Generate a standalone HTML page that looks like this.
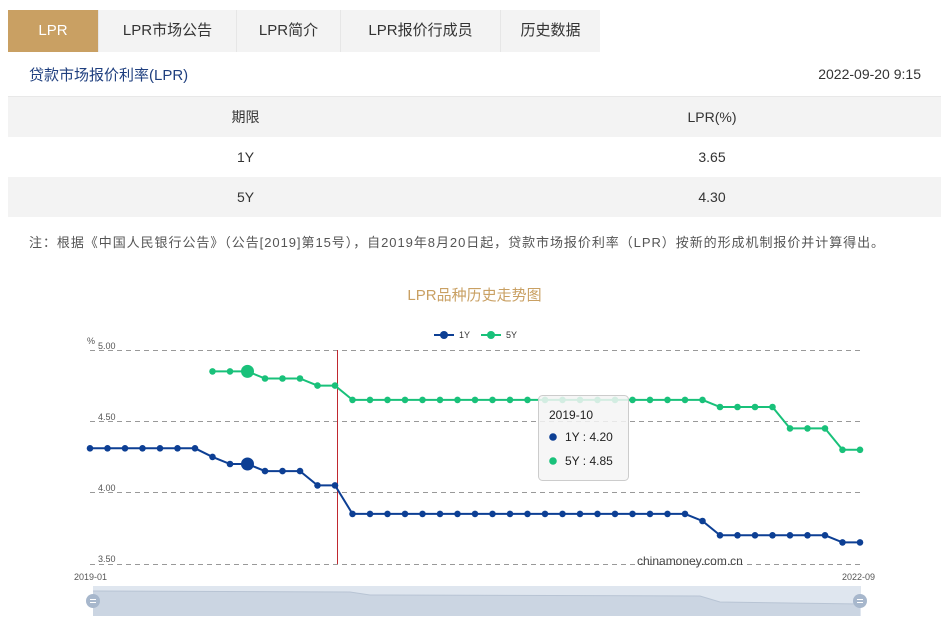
<!DOCTYPE html>
<html><head><meta charset="utf-8"><style>
*{margin:0;padding:0;box-sizing:border-box}
body{width:949px;height:623px;background:#fff;font-family:"Liberation Sans","Noto Sans CJK SC",sans-serif;color:#333;position:relative;overflow:hidden}
.tabs{position:absolute;left:8px;top:10px;height:42px;display:flex}
.tab{height:42px;line-height:42px;text-align:center;font-size:15px;color:#333;background:#f3f3f3;border-right:1px solid #e6e6e6}
.tab.on{background:#c9a063;color:#fff}
.title{position:absolute;left:29px;top:64px;font-size:15px;color:#1f3f7f}
.date{position:absolute;right:28px;top:66px;font-size:14px;color:#333}
.tbl{position:absolute;left:8px;top:96px;width:933px;border-top:1px solid #e8e8e8}
.row{height:40px;display:flex;font-size:14px;line-height:40px}
.row.g{background:#f3f3f3}
.row div{text-align:center}
.c1{width:475px}.c2{width:458px}
.note{position:absolute;left:29px;top:232px;font-size:13px;color:#555;letter-spacing:0.95px;white-space:nowrap}
.ct{position:absolute;left:0;width:949px;top:284px;text-align:center;font-size:15px;color:#c9a063}
</style></head><body>
<div class="tabs">
<div class="tab on" style="width:91px">LPR</div>
<div class="tab" style="width:138px">LPR市场公告</div>
<div class="tab" style="width:104px">LPR简介</div>
<div class="tab" style="width:160px">LPR报价行成员</div>
<div class="tab" style="width:99px;border-right:0">历史数据</div>
</div>
<div class="title">贷款市场报价利率(LPR)</div>
<div class="date">2022-09-20 9:15</div>
<div class="tbl">
<div class="row g"><div class="c1">期限</div><div class="c2">LPR(%)</div></div>
<div class="row"><div class="c1">1Y</div><div class="c2">3.65</div></div>
<div class="row g"><div class="c1">5Y</div><div class="c2">4.30</div></div>
</div>
<div class="note">注：根据《中国人民银行公告》（公告[2019]第15号），自2019年8月20日起，贷款市场报价利率（LPR）按新的形成机制报价并计算得出。</div>
<div class="ct">LPR品种历史走势图</div>
<svg width="949" height="623" style="position:absolute;left:0;top:0" font-family="Liberation Sans, sans-serif">
<defs>
<marker id="mb" markerWidth="8" markerHeight="8" refX="4" refY="4" markerUnits="userSpaceOnUse"><circle cx="4" cy="4" r="3.3" fill="#0d3f94"/></marker>
<marker id="mg" markerWidth="8" markerHeight="8" refX="4" refY="4" markerUnits="userSpaceOnUse"><circle cx="4" cy="4" r="3.3" fill="#19c17a"/></marker>
</defs>
<g stroke="#999" stroke-dasharray="5,4" stroke-width="1">
<line x1="90" y1="350.5" x2="860" y2="350.5"/><line x1="90" y1="421.5" x2="860" y2="421.5"/>
<line x1="90" y1="492.5" x2="860" y2="492.5"/><line x1="90" y1="564.5" x2="860" y2="564.5"/>
</g>
<g font-size="9" fill="#555">
<text x="87" y="344">%</text>
<text x="98" y="349">5.00</text><text x="98" y="420">4.50</text><text x="98" y="491">4.00</text><text x="98" y="562">3.50</text>
<text x="74" y="580">2019-01</text><text x="842" y="580">2022-09</text>
</g>
<rect x="337" y="350" width="1" height="214" fill="#c0282f"/>
<polyline fill="none" stroke="#0d3f94" stroke-width="2" marker-start="url(#mb)" marker-mid="url(#mb)" marker-end="url(#mb)" points="90,448.3 107.5,448.3 125,448.3 142.5,448.3 160,448.3 177.5,448.3 195,448.3 212.5,456.9 230,464 247.5,464 265,471.1 282.5,471.1 300,471.1 317.5,485.4 335,485.4 352.5,513.9 370,513.9 387.5,513.9 405,513.9 422.5,513.9 440,513.9 457.5,513.9 475,513.9 492.5,513.9 510,513.9 527.5,513.9 545,513.9 562.5,513.9 580,513.9 597.5,513.9 615,513.9 632.5,513.9 650,513.9 667.5,513.9 685,513.9 702.5,521 720,535.3 737.5,535.3 755,535.3 772.5,535.3 790,535.3 807.5,535.3 825,535.3 842.5,542.4 860,542.4"/>
<polyline fill="none" stroke="#19c17a" stroke-width="2" marker-start="url(#mg)" marker-mid="url(#mg)" marker-end="url(#mg)" points="212.5,371.4 230,371.4 247.5,371.4 265,378.5 282.5,378.5 300,378.5 317.5,385.6 335,385.6 352.5,399.9 370,399.9 387.5,399.9 405,399.9 422.5,399.9 440,399.9 457.5,399.9 475,399.9 492.5,399.9 510,399.9 527.5,399.9 545,399.9 562.5,399.9 580,399.9 597.5,399.9 615,399.9 632.5,399.9 650,399.9 667.5,399.9 685,399.9 702.5,399.9 720,407 737.5,407 755,407 772.5,407 790,428.4 807.5,428.4 825,428.4 842.5,449.8 860,449.8"/>
<circle cx="247.5" cy="464" r="6.5" fill="#0d3f94"/>
<circle cx="247.5" cy="371.4" r="6.5" fill="#19c17a"/>
<g font-size="9" fill="#333">
<line x1="434" y1="335" x2="454" y2="335" stroke="#0d3f94" stroke-width="2"/><circle cx="444" cy="335" r="4" fill="#0d3f94"/><text x="459" y="338">1Y</text>
<line x1="481" y1="335" x2="501" y2="335" stroke="#19c17a" stroke-width="2"/><circle cx="491" cy="335" r="4" fill="#19c17a"/><text x="506" y="338">5Y</text>
</g>
<text x="637" y="565" font-size="12" fill="#444">chinamoney.com.cn</text>
<rect x="93" y="586" width="768" height="30" fill="#dfe6ef"/>
<path d="M93,591 L350,592 L370,595 L700,596 L720,602 L860,604 L860,616 L93,616Z" fill="#cbd5e2"/>
<path d="M93,591 L350,592 L370,595 L700,596 L720,602 L860,604" fill="none" stroke="#b8c4d4"/>
<circle cx="93" cy="601" r="7" fill="#a7b7cc"/><circle cx="860" cy="601" r="7" fill="#a7b7cc"/>
<g stroke="#fff" stroke-width="1"><line x1="90" y1="599.5" x2="96" y2="599.5"/><line x1="90" y1="602.5" x2="96" y2="602.5"/><line x1="857" y1="599.5" x2="863" y2="599.5"/><line x1="857" y1="602.5" x2="863" y2="602.5"/></g>
<rect x="538.5" y="395.5" width="90" height="85" rx="4" fill="rgba(245,245,245,0.85)" stroke="#ccc"/>
<g font-size="12" fill="#222">
<text x="549" y="419">2019-10</text>
<circle cx="553" cy="437" r="3.8" fill="#0d3f94"/><text x="565" y="441">1Y  : 4.20</text>
<circle cx="553" cy="461" r="3.8" fill="#19c17a"/><text x="565" y="465">5Y  : 4.85</text>
</g>
</svg>
</body></html>
